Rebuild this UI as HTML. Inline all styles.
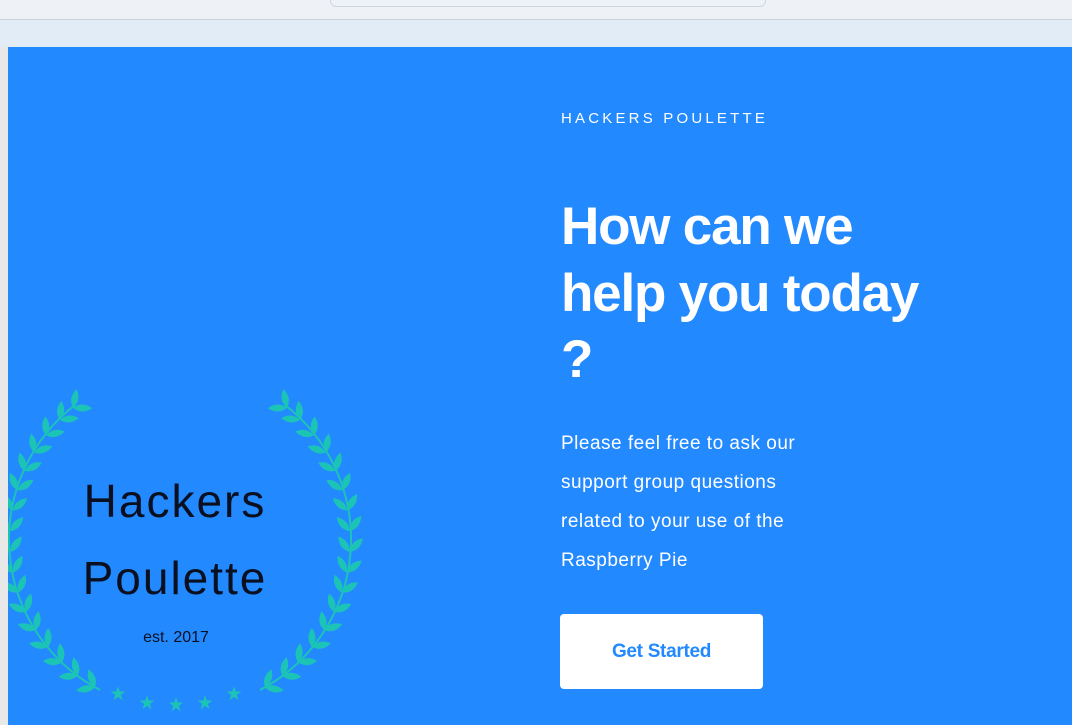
<!DOCTYPE html>
<html><head><meta charset="utf-8"><style>
*{margin:0;padding:0;box-sizing:border-box}
body{width:1072px;height:725px;overflow:hidden;background:#2389ff;font-family:"Liberation Sans",sans-serif;position:relative}
.top{position:absolute;left:0;top:0;width:1072px;height:20px;background:#eef2f6;border-bottom:1px solid #c9d0d8}
.url{position:absolute;left:330px;top:-6px;width:436px;height:13px;border:1px solid #cfd5dc;border-radius:6px;background:#eef2f6}
.bar2{position:absolute;left:0;top:20px;width:1072px;height:27px;background:#e2ecf7}
.strip{position:absolute;left:0;top:47px;width:8px;height:678px;background:#e8e8e8}
.t{position:absolute;left:561px;color:#fff;white-space:nowrap}
.eyebrow{top:110px;font-size:15px;letter-spacing:3.2px}
h1{position:absolute;left:561px;top:194px;font-size:53px;line-height:66.5px;font-weight:bold;color:#fff;letter-spacing:-1.2px;width:400px}
.p{top:424px;font-size:19px;line-height:39px;white-space:normal;width:270px;letter-spacing:0.5px}
.btn{position:absolute;left:560px;top:614px;width:203px;height:75px;background:#fff;border-radius:4px;color:#2389ff;font-weight:bold;font-size:19px;display:flex;align-items:center;justify-content:center;letter-spacing:-.3px}
</style></head><body>
<div class="top"><div class="url"></div></div>
<div class="bar2"></div>
<div class="strip"></div>
<svg style="position:absolute;left:0;top:0" width="400" height="725">
<defs>
<path id="lf" d="M0 0 Q7 -9 0 -19 Q-7 -9 0 0Z" fill="#1cc4b6"/>
<g id="pr">
<use href="#lf" transform="translate(10 540) rotate(-40)"/>
<use href="#lf" transform="translate(10 540) rotate(40)"/>
</g>
</defs>
<g id="L">
<path d="M75 405 A170 170 0 0 0 100 690" fill="none" stroke="#1cc4b6" stroke-width="2"/>
<use href="#pr" transform="rotate(-60 180 540)"/>
<use href="#pr" transform="rotate(-53 180 540)"/>
<use href="#pr" transform="rotate(-46 180 540)"/>
<use href="#pr" transform="rotate(-39 180 540)"/>
<use href="#pr" transform="rotate(-32 180 540)"/>
<use href="#pr" transform="rotate(-25 180 540)"/>
<use href="#pr" transform="rotate(-18 180 540)"/>
<use href="#pr" transform="rotate(-11 180 540)"/>
<use href="#pr" transform="rotate(-4 180 540)"/>
<use href="#pr" transform="rotate(3 180 540)"/>
<use href="#pr" transform="rotate(10 180 540)"/>
<use href="#pr" transform="rotate(17 180 540)"/>
<use href="#pr" transform="rotate(24 180 540)"/>
<use href="#pr" transform="rotate(31 180 540)"/>
<use href="#pr" transform="rotate(38 180 540)"/>
<use href="#pr" transform="rotate(45 180 540)"/>
<use href="#pr" transform="rotate(51 180 540)"/>
</g>
<use href="#L" transform="translate(360 0) scale(-1 1)"/>
<rect x="0" y="380" width="8" height="345" fill="#e8e8e8"/>
<text x="175" y="517" text-anchor="middle" font-family="Liberation Sans" font-size="46" letter-spacing="2" fill="#0a1020">Hackers</text>
<text x="175" y="594" text-anchor="middle" font-family="Liberation Sans" font-size="46" letter-spacing="2" fill="#0a1020">Poulette</text>
<text x="176" y="642" text-anchor="middle" font-family="Liberation Sans" font-size="16" fill="#0a1020">est. 2017</text>
<g fill="#1cc4b6" font-size="19" text-anchor="middle" font-family="DejaVu Sans">
<text x="118" y="700">★</text><text x="147" y="709">★</text><text x="176" y="711">★</text><text x="205" y="709">★</text><text x="234" y="700">★</text>
</g>
</svg>
<div class="t eyebrow">HACKERS POULETTE</div>
<h1>How can we help you today ?</h1>
<div class="t p">Please feel free to ask our support group questions related to your use of the Raspberry Pie</div>
<div class="btn">Get Started</div>
</body></html>
